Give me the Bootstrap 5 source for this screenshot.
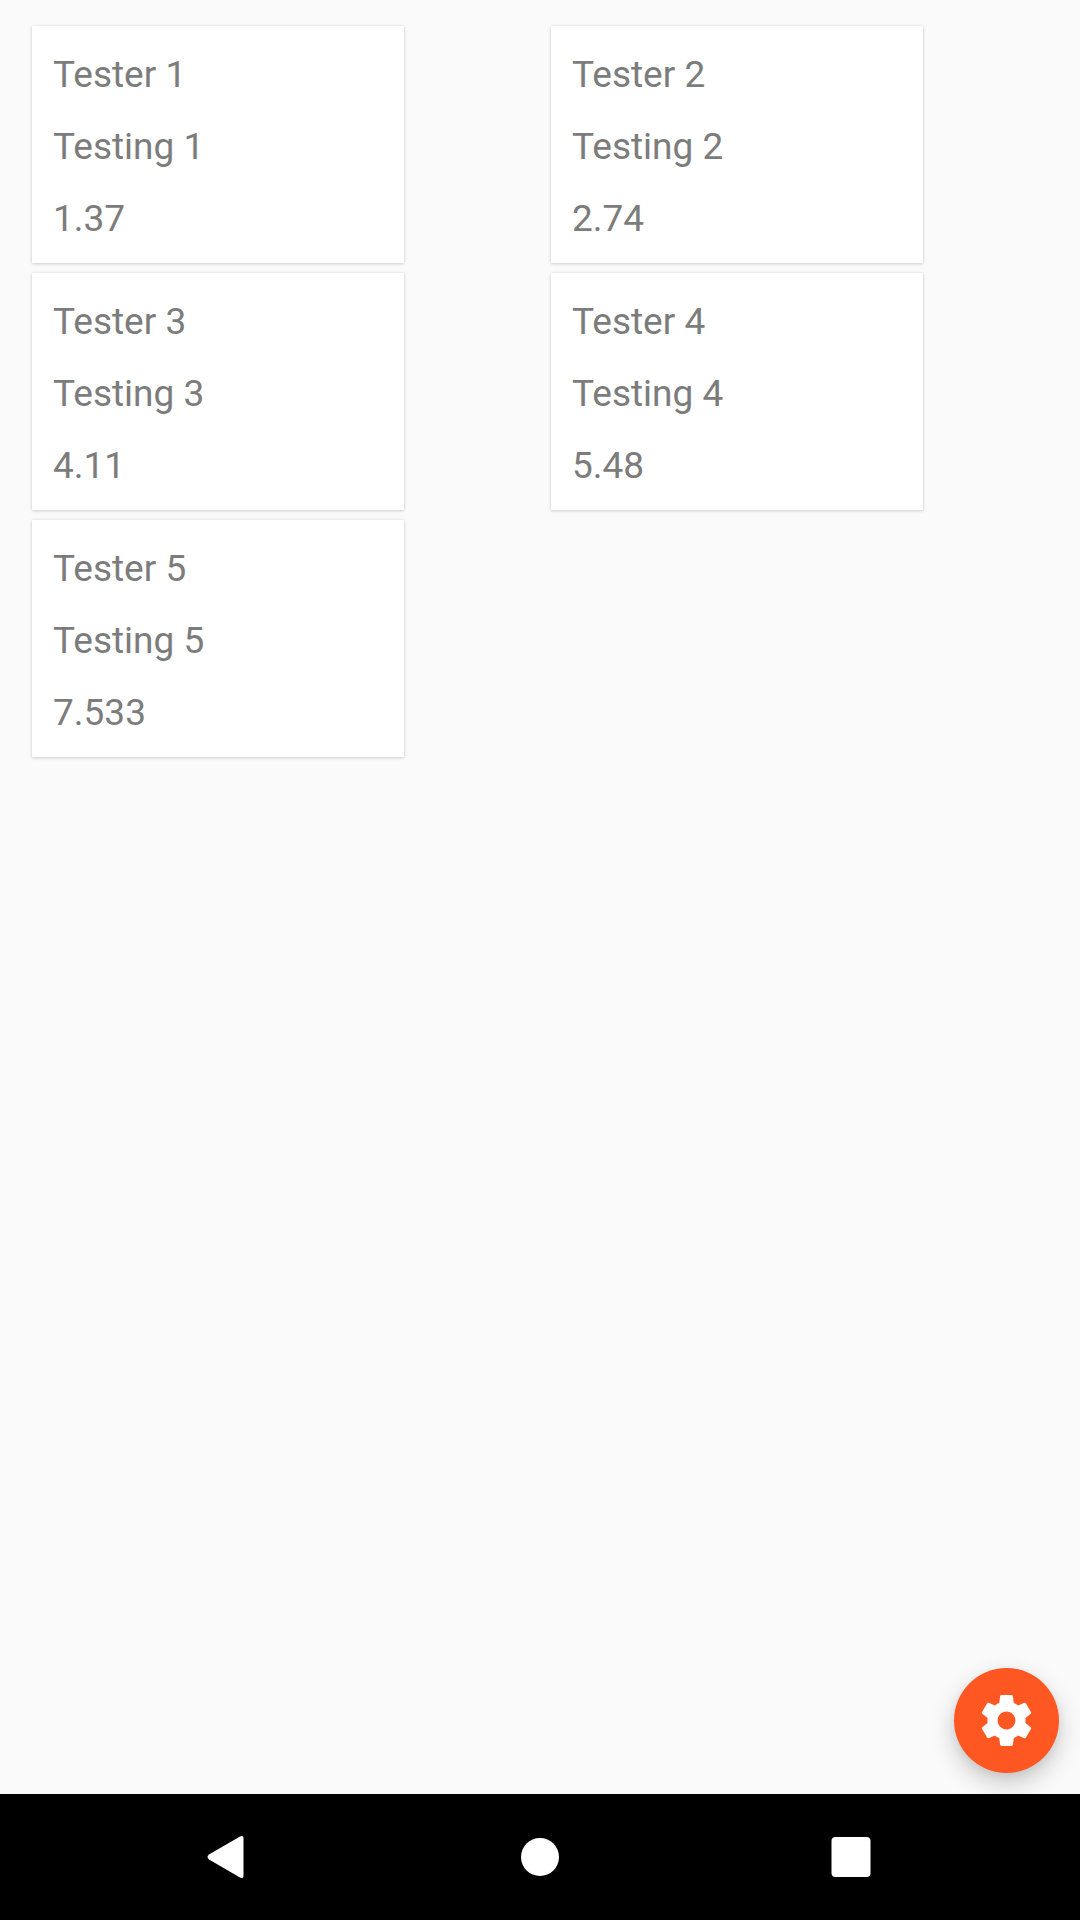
<!DOCTYPE html>
<html lang="en">
<head>
    <meta charset="UTF-8">
    <meta name="viewport" content="width=device-width, initial-scale=1.0">
    <title>Testers</title>
    <link href="https://cdn.jsdelivr.net/npm/bootstrap@5.3.0/dist/css/bootstrap.min.css" rel="stylesheet">
    <style>
        body {
            background: #fafafa;
            font-family: Roboto, "Liberation Sans", sans-serif;
        }

        .screen {
            height: 1920px;
        }

        .tester-grid {
            display: grid;
            grid-template-columns: 372px 372px;
            column-gap: 147px;
            row-gap: 10px;
            padding: 26px 0 0 32px;
        }

        .tester-card {
            height: 237px;
            padding: 12.5px 18px 8.5px 21px;
            background: #fff;
            box-shadow: 0 1px 3px rgba(0, 0, 0, .15), 0 0 3px rgba(0, 0, 0, .08);
        }

        .tester-card p {
            margin: 0;
            font-size: 37px;
            line-height: 72px;
            color: #7c7c7c;
        }

        .fab-settings {
            right: 21px;
            bottom: 147px;
            width: 105px;
            height: 105px;
            background: #ff5722;
            box-shadow: 0 10px 24px rgba(0, 0, 0, .2), 0 3px 8px rgba(0, 0, 0, .06);
        }

        .system-nav {
            height: 126px;
            background: #000;
        }
    </style>
</head>
<body>
    <div class="screen d-flex flex-column position-relative overflow-hidden">
        <main class="flex-grow-1">
            <div class="tester-grid">
                <div class="card rounded-0 border-0 tester-card"><p>Tester 1</p><p>Testing 1</p><p>1.37</p></div>
                <div class="card rounded-0 border-0 tester-card"><p>Tester 2</p><p>Testing 2</p><p>2.74</p></div>
                <div class="card rounded-0 border-0 tester-card"><p>Tester 3</p><p>Testing 3</p><p>4.11</p></div>
                <div class="card rounded-0 border-0 tester-card"><p>Tester 4</p><p>Testing 4</p><p>5.48</p></div>
                <div class="card rounded-0 border-0 tester-card"><p>Tester 5</p><p>Testing 5</p><p>7.533</p></div>
            </div>
        </main>

        <button type="button" aria-label="Settings" class="btn fab-settings position-absolute rounded-circle border-0 p-0 d-flex align-items-center justify-content-center">
            <svg width="61" height="61" viewBox="0 0 24 24" fill="#fff"><path d="M19.43 12.98c.04-.32.07-.64.07-.98s-.03-.66-.07-.98l2.11-1.65c.19-.15.24-.42.12-.64l-2-3.46c-.12-.22-.39-.3-.61-.22l-2.49 1c-.52-.4-1.08-.73-1.69-.98l-.38-2.65C14.46 2.18 14.25 2 14 2h-4c-.25 0-.46.18-.49.42l-.38 2.65c-.61.25-1.17.59-1.69.98l-2.49-1c-.23-.09-.49 0-.61.22l-2 3.46c-.13.22-.07.49.12.64l2.11 1.65c-.04.32-.07.65-.07.98s.03.66.07.98l-2.11 1.65c-.19.15-.24.42-.12.64l2 3.46c.12.22.39.3.61.22l2.49-1c.52.4 1.08.73 1.69.98l.38 2.65c.03.24.24.42.49.42h4c.25 0 .46-.18.49-.42l.38-2.65c.61-.25 1.17-.59 1.69-.98l2.49 1c.23.09.49 0 .61-.22l2-3.46c.12-.22.07-.49-.12-.64l-2.11-1.65zM12 15.5c-1.93 0-3.5-1.57-3.5-3.5s1.57-3.5 3.5-3.5 3.5 1.57 3.5 3.5-1.57 3.5-3.5 3.5z"/></svg>
        </button>

        <nav class="system-nav">
            <svg width="1080" height="126" viewBox="0 0 1080 126" class="d-block" fill="#fff">
                <path d="M240 42.500 Q243.500 40.500 243.500 45 L243.500 81 Q243.500 85.500 240 83.500 L209 65.500 Q206 63 209 60.500 Z"/>
                <circle cx="540" cy="63" r="19"/>
                <rect x="831.500" y="43" width="39" height="40" rx="4"/>
            </svg>
        </nav>
    </div>
    <script src="https://cdn.jsdelivr.net/npm/bootstrap@5.3.0/dist/js/bootstrap.bundle.min.js"></script>
</body>
</html>
